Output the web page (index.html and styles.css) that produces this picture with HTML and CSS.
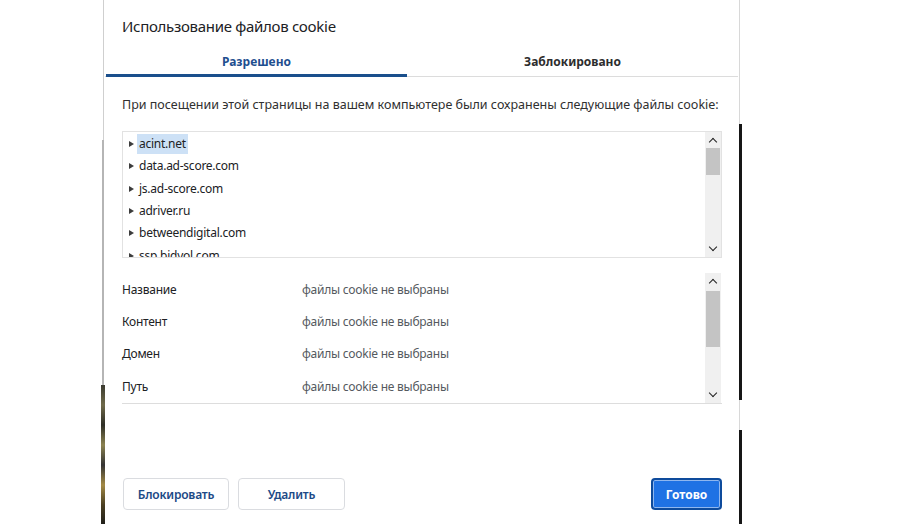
FILE: index.html
```html
<!DOCTYPE html>
<html lang="ru">
<head>
<meta charset="utf-8">
<title>Использование файлов cookie</title>
<link rel="stylesheet" href="styles.css">
</head>
<body>
<div class="stage">
  <div class="edge edge-left"></div>
  <div class="dialog">
    <h1 class="title">Использование файлов cookie</h1>
    <div class="tabs">
      <div class="tab tab-active">Разрешено</div>
      <div class="tab">Заблокировано</div>
    </div>
    <div class="body">
      <p class="desc">При посещении этой страницы на вашем компьютере были сохранены следующие файлы cookie:</p>
      <div class="tree">
        <ul class="tree-list">
          <li class="tree-item"><span class="twisty"></span><span class="tree-label selected">acint.net</span></li>
          <li class="tree-item"><span class="twisty"></span><span class="tree-label">data.ad-score.com</span></li>
          <li class="tree-item"><span class="twisty"></span><span class="tree-label">js.ad-score.com</span></li>
          <li class="tree-item"><span class="twisty"></span><span class="tree-label">adriver.ru</span></li>
          <li class="tree-item"><span class="twisty"></span><span class="tree-label">betweendigital.com</span></li>
          <li class="tree-item"><span class="twisty"></span><span class="tree-label">ssp.bidvol.com</span></li>
        </ul>
        <div class="scrollbar">
          <span class="sb-arrow sb-up"></span>
          <div class="sb-track sb-track-tree"><div class="sb-thumb"></div></div>
          <span class="sb-arrow sb-down"></span>
        </div>
      </div>
      <div class="details">
        <div class="details-rows">
          <div class="row"><span class="key">Название</span><span class="val">файлы cookie не выбраны</span></div>
          <div class="row"><span class="key">Контент</span><span class="val">файлы cookie не выбраны</span></div>
          <div class="row"><span class="key">Домен</span><span class="val">файлы cookie не выбраны</span></div>
          <div class="row"><span class="key">Путь</span><span class="val">файлы cookie не выбраны</span></div>
        </div>
        <div class="scrollbar scrollbar-details">
          <span class="sb-arrow sb-up"></span>
          <div class="sb-track sb-track-details"><div class="sb-thumb"></div></div>
          <span class="sb-arrow sb-down"></span>
        </div>
      </div>
    </div>
    <div class="footer">
      <button class="btn btn-block">Блокировать</button>
      <button class="btn btn-delete">Удалить</button>
      <span class="spacer"></span>
      <button class="btn btn-primary">Готово</button>
    </div>
  </div>
  <div class="edge edge-right"></div>
</div>
</body>
</html>
```

FILE: styles.css
```css
* { box-sizing: border-box; }

html, body {
  margin: 0;
  padding: 0;
  background: #ffffff;
  height: 524px;
  overflow: hidden;
  font-family: "Noto Sans", "Open Sans", sans-serif;
  color: #202124;
}

.stage {
  display: flex;
  padding-left: 101px;
  height: 524px;
}

.edge {
  width: 4px;
  flex: none;
}

.edge-left {
  background:
    linear-gradient(to right, transparent 2px, #cfcfcf 2px, #cfcfcf 3px, transparent 3px) 0 0 / 4px 140px no-repeat,
    linear-gradient(to right, transparent 1px, #b5b5b5 1px, #b5b5b5 3px, transparent 3px) 0 140px / 4px 245px no-repeat,
    linear-gradient(to bottom, #3a3a30 0, #6f6a4a 20px, #2e2e26 40px, #8b8250 60px, #333 80px, #a38a45 100px, #4a3f22 120px, #1e1e1a 140px) 0 385px / 4px 139px no-repeat;
}

.edge-right {
  background:
    linear-gradient(to right, transparent 1px, #d8d8d8 1px, #d8d8d8 2px, transparent 2px) 0 0 / 4px 124px no-repeat,
    linear-gradient(#161616, #161616) 1px 124px / 3px 276px no-repeat,
    linear-gradient(to right, transparent 1px, #d8d8d8 1px, #d8d8d8 2px, transparent 2px) 0 400px / 4px 30px no-repeat,
    linear-gradient(#161616, #161616) 1px 430px / 3px 94px no-repeat;
}

.dialog {
  width: 633px;
  flex: none;
  background: #ffffff;
  display: flex;
  flex-direction: column;
}

.title {
  margin: 0;
  padding: 15px 0 0 17px;
  height: 46px;
  font-size: 15px;
  letter-spacing: -0.3px;
  line-height: 22px;
  font-weight: 400;
  color: #202124;
}

.tabs {
  display: grid;
  grid-template-columns: 302px 1fr;
  border-bottom: 1px solid #dcdcdc;
}

.tab {
  height: 31px;
  padding-top: 7px;
  text-align: center;
  font-size: 12px;
  line-height: 17px;
  font-weight: 700;
  color: #2d2d2d;
  border-bottom: 3px solid transparent;
  margin-bottom: -1px;
}

.tab-active {
  color: #1f4f8f;
  border-bottom-color: #1a4f8c;
  margin-left: 1px;
}

.body {
  padding: 0 16px 0 17px;
}

.desc {
  margin: 19px 0 0 0;
  font-size: 12.5px;
  line-height: 18px;
  color: #303030;
}

.tree {
  margin-top: 17px;
  height: 127px;
  border: 1px solid #e2e2e2;
  display: flex;
  overflow: hidden;
}

.tree-list {
  list-style: none;
  margin: 0;
  padding: 1px 0 0 6px;
  flex: 1;
}

.tree-item {
  height: 22.3px;
  display: flex;
  align-items: center;
  font-size: 12px;
  letter-spacing: -0.25px;
  color: #202124;
}

.twisty {
  width: 0;
  height: 0;
  border-left: 5px solid #3c3c3c;
  border-top: 3.5px solid transparent;
  border-bottom: 3.5px solid transparent;
  margin-right: 3px;
}

.tree-label {
  padding: 1px 2px 2px 2px;
  line-height: 17px;
}

.selected {
  background: #cde1f6;
}

.scrollbar {
  width: 16px;
  flex: none;
  background: #f0f0f0;
  display: flex;
  flex-direction: column;
  align-items: center;
}

.sb-arrow {
  height: 16px;
  width: 16px;
  flex: none;
  position: relative;
}

.sb-arrow::before {
  content: "";
  position: absolute;
  left: 5px;
  width: 5px;
  height: 5px;
  border-left: 1.6px solid #222;
  border-top: 1.6px solid #222;
}

.sb-up::before { top: 7px; transform: rotate(45deg); }
.sb-down::before { top: 3px; transform: rotate(225deg); }

.sb-track {
  flex: 1;
  width: 100%;
}

.sb-thumb {
  background: #c4c4c4;
  margin: 0 1px;
}

.sb-track-tree .sb-thumb { height: 27px; }
.sb-track-details .sb-thumb { height: 56px; margin-top: 2px; }

.details {
  margin-top: 14px;
  height: 132px;
  border-bottom: 1px solid #dddddd;
  display: flex;
}

.details-rows {
  flex: 1;
  padding-top: 1px;
}

.row {
  height: 32.3px;
  display: flex;
  align-items: center;
  font-size: 12px;
  letter-spacing: -0.25px;
}

.key {
  width: 180px;
  color: #202124;
}

.val {
  color: #555a60;
}

.scrollbar-details {
  margin-top: 1px;
  margin-right: 1px;
}

.footer {
  display: flex;
  align-items: center;
  padding: 74px 16px 0 18px;
}

.spacer { flex: 1; }

.btn {
  height: 32px;
  font-family: "Noto Sans", "Open Sans", sans-serif;
  font-size: 12px;
  letter-spacing: -0.2px;
  font-weight: 600;
  border-radius: 4px;
  border: 1px solid #dadce0;
  background: #ffffff;
  color: #1c4a86;
  padding: 0;
}

.btn-block { width: 106px; margin-right: 9px; }
.btn-delete { width: 107px; }

.btn-primary {
  width: 71px;
  background: #1f72e4;
  color: #ffffff;
  font-weight: 700;
  letter-spacing: 0;
  border: 2px solid #0e4b9c;
  box-shadow: inset 0 0 0 1px #8fb7ef;
}
```
